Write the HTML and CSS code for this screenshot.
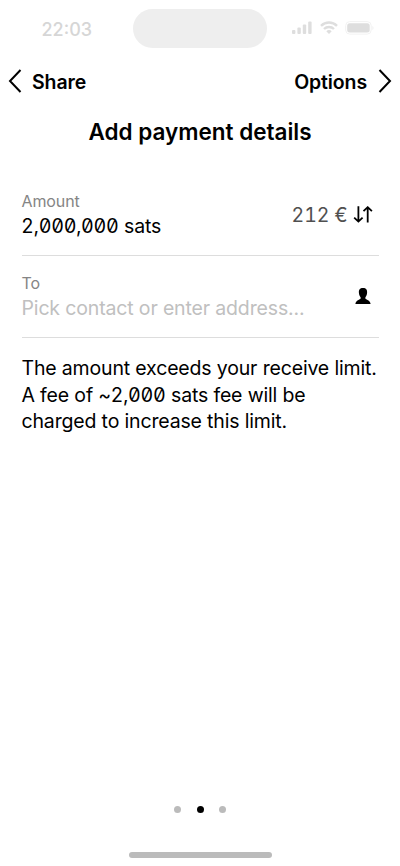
FILE: index.html
```html
<!DOCTYPE html>
<html lang="en">
<head>
<meta charset="utf-8">
<title>Add payment details</title>
<link rel="stylesheet" href="styles.css">
</head>
<body>
<div class="screen">
  <header class="status">
    <span class="time">22:03</span>
    <span class="island"></span>
    <span class="indicators">
      <svg width="20" height="14" viewBox="0 0 20 14" fill="#dedede"><rect x="0" y="9" width="3.4" height="4" rx="1"/><rect x="5.4" y="6.500" width="3.400" height="6.500" rx="1"/><rect x="10.800" y="3.500" width="3.400" height="9.500" rx="1"/><rect x="16.200" y="0.500" width="3.400" height="12.500" rx="1"/></svg>
      <svg width="18" height="14" viewBox="0 0 18 14" fill="none" stroke="#dedede" stroke-width="2.400"><path d="M1 4.800a11.500 11.500 0 0 1 16 0M4 8a7.200 7.200 0 0 1 10 0"/><path d="M9 13L6.300 10.300a4 4 0 0 1 5.400 0z" fill="#dedede" stroke="none"/></svg>
      <svg width="29" height="14" viewBox="0 0 29 14"><rect x=".7" y=".6" width="25.500" height="12.500" rx="4" fill="none" stroke="#f2f2f2"/><rect x="2.200" y="2.300" width="22.500" height="9.200" rx="2.500" fill="#dedede"/><path d="M27.300 5v4q1.300-.6 1.300-2T27.300 5z" fill="#f2f2f2"/></svg>
    </span>
  </header>
  <nav class="nav">
    <span class="back"><svg width="14" height="24" viewBox="0 0 14 24"><path d="M12.500 1L2 12l10.500 11"/></svg><b>Share</b></span>
    <span class="next"><b>Options</b><svg width="14" height="24" viewBox="0 0 14 24"><path d="M1.500 1L12 12 1.500 23"/></svg></span>
  </nav>
  <h1>Add payment details</h1>
  <main>
    <div class="row">
      <div><div class="label">Amount</div><div class="value"><span class="num">2,000,000</span> sats</div></div>
      <div class="fiat"><span>212 €</span><svg width="20" height="18" viewBox="0 0 20 18"><path d="M5.400 .3v15M1.200 11.600L5.400 15.600l4.200-4M14.700 16.500V1.300M10.500 5.200L14.700 1.200l4.200 4"/></svg></div>
    </div>
    <div class="row">
      <div><div class="label">To</div><div class="value hint">Pick contact or enter address...</div></div>
      <svg class="person" width="16" height="17" viewBox="0 0 16 17"><path d="M8 0c3.200 0 4.300 1.900 4.100 4.800-.1 2.200-1 3.500-1.700 4.400v1.300c.3 1.300 4.900 1.500 5.200 5.500H.4c.3-4 4.900-4.200 5.200-5.500V9.200C4.900 8.300 4 7 3.900 4.800 3.700 1.900 4.800 0 8 0z"/></svg>
    </div>
    <p class="note">The amount exceeds your receive limit.<br>A fee of ~<span class="num">2,000</span> sats fee will be<br>charged to increase this limit.</p>
  </main>
  <footer><div class="dots"><i></i><i class="on"></i><i></i></div><div class="home"></div></footer>
</div>
</body>
</html>
```
FILE: styles.css
```css
body{margin:0;background:#fff;font-family:Inter,sans-serif;color:#000}
.screen{height:866px;display:flex;flex-direction:column;overflow:hidden}
.status{height:56px;display:grid;grid-template-columns:133px 134px 133px;box-sizing:border-box;padding-top:9px}
.time{font-size:18px;font-weight:500;line-height:22px;color:#d6d6d6;padding:10px 0 0 41.500px}
.island{height:39px;border-radius:20px;background:#eee}
.indicators{display:flex;gap:7.500px;padding:12px 0 0 25px}
.nav{display:flex;justify-content:space-between;padding:0 8px;height:50px;font-size:19.500px}
.nav b{font-weight:600;padding-top:2px;letter-spacing:-.12px}
.back,.next{display:flex;align-items:center;gap:10px}
.next{gap:11px}
.nav svg{fill:none;stroke:#000;stroke-width:2}
h1{font-size:22.500px;font-weight:600;line-height:28px;text-align:center;margin:12px 0 0}
main{padding:28px 21.500px 0}
.row{display:flex;justify-content:space-between;align-items:center;height:81px;border-bottom:1px solid #ddd}
.label{font-size:16px;line-height:20px;color:#858585;padding-top:1px;letter-spacing:-.1px}
.value{font-size:19.500px;line-height:28px;letter-spacing:-.15px;padding-top:1px;margin-bottom:-1px;font-feature-settings:"zero"}
.value .num{letter-spacing:.2px}
.hint{color:#c0c0c0}
.fiat{display:flex;align-items:center;gap:5px;font-size:19.500px;letter-spacing:-.05px;font-feature-settings:"tnum";color:#505050;padding-right:6px}
.fiat svg{fill:none;stroke:#000;stroke-width:1.800}
.person{margin-right:8px}
.note{font-size:19.500px;line-height:26.700px;letter-spacing:-.16px;margin:17px 0 0;white-space:nowrap;font-feature-settings:"zero"}
.note .num{letter-spacing:.15px}
footer{margin-top:auto;display:flex;flex-direction:column;align-items:center}
.dots{display:flex;gap:15.500px}
.dots i{width:7px;height:7px;border-radius:50%;background:#bbb}
.dots .on{background:#000}
.home{width:143px;height:6px;border-radius:3px;background:#bbb;margin:39px 0 8px}
```
